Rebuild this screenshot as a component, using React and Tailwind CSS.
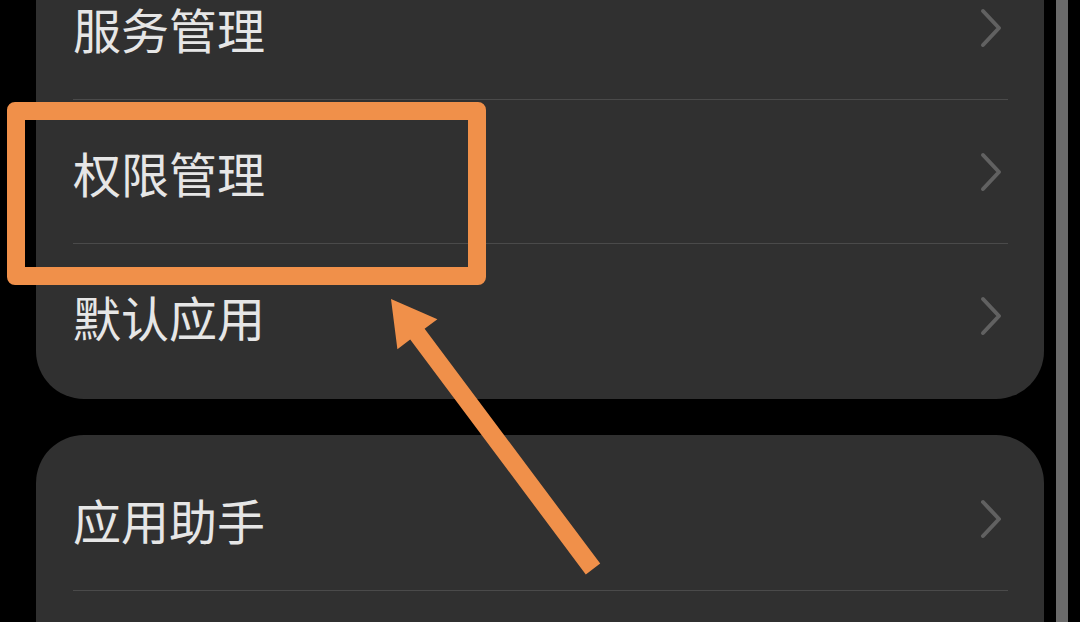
import { Fragment } from 'react'

const firstGroup = ['服务管理', '权限管理', '默认应用']
const secondGroup = ['应用助手', '']

function Chevron() {
  return (
    <svg width="22" height="40" viewBox="0 0 22 40" className="shrink-0">
      <polyline
        points="3,3 19,20 3,37"
        fill="none"
        stroke="#616161"
        strokeWidth="4"
        strokeLinecap="round"
        strokeLinejoin="round"
      />
    </svg>
  )
}

function Row({ label }) {
  return (
    <div className="flex h-[143px] items-center justify-between pl-[37px] pr-[42px]">
      <span className="text-[48px] leading-none text-[#e6e6e6]">{label}</span>
      {label ? <Chevron /> : null}
    </div>
  )
}

function Group({ items, className }) {
  return (
    <div className={`w-[1008px] rounded-[48px] bg-[#303030] py-[12px] ${className}`}>
      {items.map((label, index) => (
        <Fragment key={index}>
          {index > 0 ? <div className="ml-[37px] mr-[36px] h-px bg-[#4a4a4a]" /> : null}
          <Row label={label} />
        </Fragment>
      ))}
    </div>
  )
}

export default function App() {
  return (
    <div
      className="relative flex h-[622px] w-[1080px] overflow-hidden bg-black"
      style={{ fontFamily: '"Noto Sans CJK SC", "Noto Sans", sans-serif' }}
    >
      <div className="flex flex-col gap-[36px] pl-[36px]">
        <Group items={firstGroup} className="-mt-[56px]" />
        <Group items={secondGroup} />
      </div>
      <div className="ml-[12px] h-full w-[12px] bg-[#6a6a6a]" />

      <div className="absolute left-[7px] top-[102px] h-[183px] w-[479px] rounded-[8px] border-[18px] border-[#f0904a]" />

      <svg className="pointer-events-none absolute left-0 top-0" width="1080" height="622">
        <polygon
          points="391,299 437.4,319.2 424.6,328.8 600.2,563.6 585.8,574.4 410.2,339.6 397.4,349.2"
          fill="#f0904a"
        />
      </svg>
    </div>
  )
}
